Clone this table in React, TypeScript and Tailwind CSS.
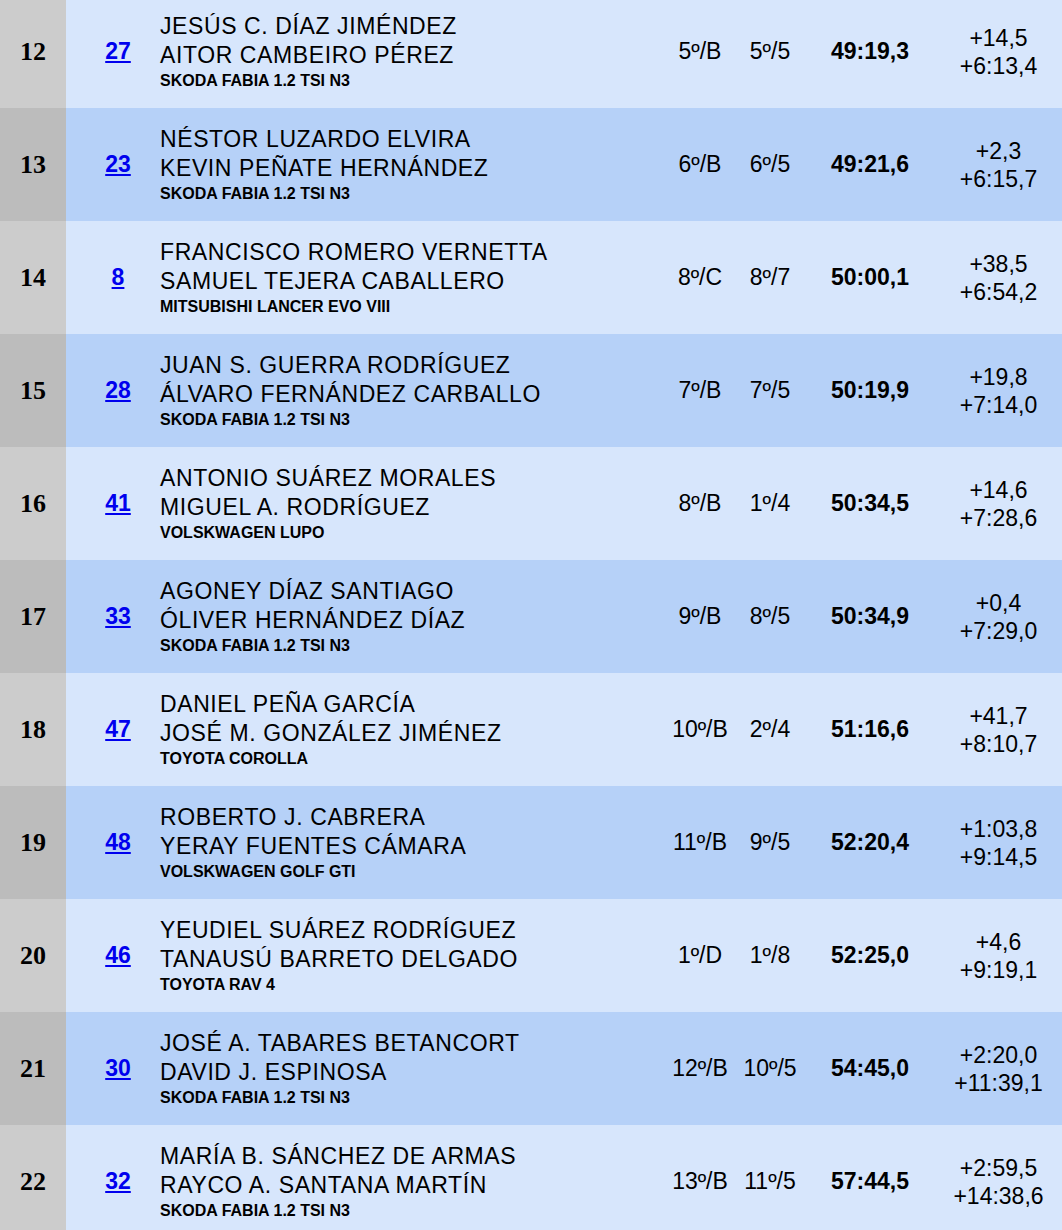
type Row = {
    pos: number
    num: string
    driver: string
    codriver: string
    car: string
    cls: string
    grp: string
    time: string
    prev: string
    first: string
}

const rows: Row[] = [
    { pos: 12, num: "27", driver: "JESÚS C. DÍAZ JIMÉNDEZ", codriver: "AITOR CAMBEIRO PÉREZ", car: "SKODA FABIA 1.2 TSI N3", cls: "5º/B", grp: "5º/5", time: "49:19,3", prev: "+14,5", first: "+6:13,4" },
    { pos: 13, num: "23", driver: "NÉSTOR LUZARDO ELVIRA", codriver: "KEVIN PEÑATE HERNÁNDEZ", car: "SKODA FABIA 1.2 TSI N3", cls: "6º/B", grp: "6º/5", time: "49:21,6", prev: "+2,3", first: "+6:15,7" },
    { pos: 14, num: "8", driver: "FRANCISCO ROMERO VERNETTA", codriver: "SAMUEL TEJERA CABALLERO", car: "MITSUBISHI LANCER EVO VIII", cls: "8º/C", grp: "8º/7", time: "50:00,1", prev: "+38,5", first: "+6:54,2" },
    { pos: 15, num: "28", driver: "JUAN S. GUERRA RODRÍGUEZ", codriver: "ÁLVARO FERNÁNDEZ CARBALLO", car: "SKODA FABIA 1.2 TSI N3", cls: "7º/B", grp: "7º/5", time: "50:19,9", prev: "+19,8", first: "+7:14,0" },
    { pos: 16, num: "41", driver: "ANTONIO SUÁREZ MORALES", codriver: "MIGUEL A. RODRÍGUEZ", car: "VOLSKWAGEN LUPO", cls: "8º/B", grp: "1º/4", time: "50:34,5", prev: "+14,6", first: "+7:28,6" },
    { pos: 17, num: "33", driver: "AGONEY DÍAZ SANTIAGO", codriver: "ÓLIVER HERNÁNDEZ DÍAZ", car: "SKODA FABIA 1.2 TSI N3", cls: "9º/B", grp: "8º/5", time: "50:34,9", prev: "+0,4", first: "+7:29,0" },
    { pos: 18, num: "47", driver: "DANIEL PEÑA GARCÍA", codriver: "JOSÉ M. GONZÁLEZ JIMÉNEZ", car: "TOYOTA COROLLA", cls: "10º/B", grp: "2º/4", time: "51:16,6", prev: "+41,7", first: "+8:10,7" },
    { pos: 19, num: "48", driver: "ROBERTO J. CABRERA", codriver: "YERAY FUENTES CÁMARA", car: "VOLSKWAGEN GOLF GTI", cls: "11º/B", grp: "9º/5", time: "52:20,4", prev: "+1:03,8", first: "+9:14,5" },
    { pos: 20, num: "46", driver: "YEUDIEL SUÁREZ RODRÍGUEZ", codriver: "TANAUSÚ BARRETO DELGADO", car: "TOYOTA RAV 4", cls: "1º/D", grp: "1º/8", time: "52:25,0", prev: "+4,6", first: "+9:19,1" },
    { pos: 21, num: "30", driver: "JOSÉ A. TABARES BETANCORT", codriver: "DAVID J. ESPINOSA", car: "SKODA FABIA 1.2 TSI N3", cls: "12º/B", grp: "10º/5", time: "54:45,0", prev: "+2:20,0", first: "+11:39,1" },
    { pos: 22, num: "32", driver: "MARÍA B. SÁNCHEZ DE ARMAS", codriver: "RAYCO A. SANTANA MARTÍN", car: "SKODA FABIA 1.2 TSI N3", cls: "13º/B", grp: "11º/5", time: "57:44,5", prev: "+2:59,5", first: "+14:38,6" },
]

export default function App() {
    return (
        <div className="h-[1230px] overflow-hidden bg-white font-['Liberation_Sans',Arial,sans-serif] text-black">
            <div className="-mt-[5px] flex flex-col">
                {rows.map((r, i) => {
                    const even = i % 2 === 0
                    return (
                        <div key={r.pos} className={`flex h-[113px] items-center ${even ? "bg-[#d7e6fc]" : "bg-[#b6d1f8]"}`}>
                            <div className={`flex h-full w-[66px] items-center justify-center font-['Liberation_Serif',serif] text-[26px] font-bold ${even ? "bg-[#cccccc]" : "bg-[#bcbcbc]"}`}>
                                {r.pos}
                            </div>
                            <div className="w-[94px] pl-[10px] text-center">
                                <a href="#" className="text-[23px] font-bold text-[#0000ee] underline">{r.num}</a>
                            </div>
                            <div className="flex w-[505px] flex-col">
                                <span className="text-[23px] leading-[29px] tracking-[0.6px]">{r.driver}</span>
                                <span className="text-[23px] leading-[29px] tracking-[0.6px]">{r.codriver}</span>
                                <span className="text-[16px] font-bold leading-[22px]">{r.car}</span>
                            </div>
                            <div className="w-[70px] text-center text-[23px]">{r.cls}</div>
                            <div className="w-[70px] text-center text-[23px]">{r.grp}</div>
                            <div className="w-[130px] text-center text-[23px] font-bold">{r.time}</div>
                            <div className="flex flex-1 flex-col items-center text-[23px] leading-[28px]">
                                <span>{r.prev}</span>
                                <span>{r.first}</span>
                            </div>
                        </div>
                    )
                })}
            </div>
        </div>
    )
}
